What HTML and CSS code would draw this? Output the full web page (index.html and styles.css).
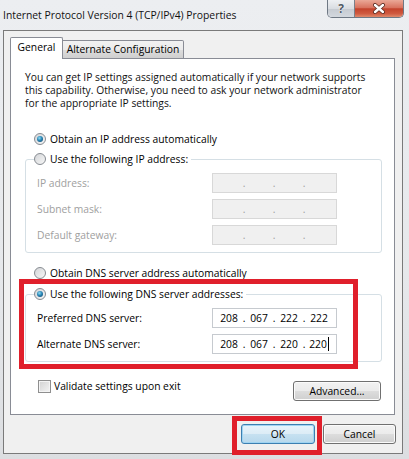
FILE: index.html
```html
<!DOCTYPE html>
<html>
<head>
<meta charset="utf-8">
<link rel="stylesheet" href="styles.css">
</head>
<body>
<div class="window">
  <div class="titlebar">
    <div class="title">Internet Protocol Version 4 (TCP/IPv4) Properties</div>
    <div class="caption-btns">
      <div class="cbtn help">?</div>
      <div class="cbtn close">
        <svg width="16" height="11" viewBox="0 0 16 11"><path d="M4 2 L12 9 M12 2 L4 9" stroke="#5a2a20" stroke-width="4" stroke-linecap="round"/><path d="M4 2 L12 9 M12 2 L4 9" stroke="#ffffff" stroke-width="2.4" stroke-linecap="round"/></svg>
      </div>
    </div>
  </div>
  <div class="client">
    <div class="tabs">
      <div class="tab active">General</div>
      <div class="tab">Alternate Configuration</div>
    </div>
    <div class="panel">
      <p class="intro">You can get IP settings assigned automatically if your network supports<br>this capability. Otherwise, you need to ask your network administrator<br>for the appropriate IP settings.</p>
      <div class="opt top1"><span class="radio checked"></span><span>Obtain an IP address automatically</span></div>
      <fieldset class="group g1">
        <legend class="opt"><span class="radio"></span><span>Use the following IP address:</span></legend>
        <div class="field disabled"><span class="flabel">IP address:</span><div class="ipbox"><span class="seg"></span><span class="dot">.</span><span class="seg"></span><span class="dot">.</span><span class="seg"></span><span class="dot">.</span><span class="seg"></span></div></div>
        <div class="field disabled"><span class="flabel">Subnet mask:</span><div class="ipbox"><span class="seg"></span><span class="dot">.</span><span class="seg"></span><span class="dot">.</span><span class="seg"></span><span class="dot">.</span><span class="seg"></span></div></div>
        <div class="field disabled"><span class="flabel">Default gateway:</span><div class="ipbox"><span class="seg"></span><span class="dot">.</span><span class="seg"></span><span class="dot">.</span><span class="seg"></span><span class="dot">.</span><span class="seg"></span></div></div>
      </fieldset>
      <div class="opt top3"><span class="radio"></span><span>Obtain DNS server address automatically</span></div>
      <fieldset class="group g2">
        <legend class="opt"><span class="radio checked"></span><span>Use the following DNS server addresses:</span></legend>
        <div class="field"><span class="flabel">Preferred DNS server:</span><div class="ipbox"><span class="seg">208</span><span class="dot">.</span><span class="seg">067</span><span class="dot">.</span><span class="seg">222</span><span class="dot">.</span><span class="seg">222</span></div></div>
        <div class="field"><span class="flabel">Alternate DNS server:</span><div class="ipbox"><span class="seg">208</span><span class="dot">.</span><span class="seg">067</span><span class="dot">.</span><span class="seg">220</span><span class="dot">.</span><span class="seg">220<span class="caret"></span></span></div></div>
      </fieldset>
      <div class="bottomrow">
        <span class="check"></span><span class="checklabel">Validate settings upon exit</span>
        <div class="btn advanced">Advanced...</div>
      </div>
    </div>
    <div class="actions">
      <div class="btn ok">OK</div>
      <div class="btn cancel">Cancel</div>
    </div>
  </div>
  <div class="mark mark-dns"></div>
  <div class="mark mark-ok"></div>
</div>
</body>
</html>
```

FILE: styles.css
```css
html, body {
  margin: 0;
  padding: 0;
  background: #e9ebee;
}
body {
  font-family: "Open Sans", "Noto Sans", sans-serif;
  font-size: 10.3px;
  color: #000;
}
.window {
  position: relative;
  width: 409px;
  height: 459px;
  overflow: hidden;
  background: linear-gradient(#eceef1, #e6e8eb 60%, #dcdee1);
}
.titlebar {
  height: 30px;
  display: flex;
  align-items: flex-start;
}
.title {
  padding-left: 3px;
  line-height: 31px;
  font-size: 10.35px;
  color: #111;
}
.caption-btns {
  margin-left: auto;
  margin-right: 5px;
  display: flex;
  height: 18px;
  border: 1px solid #6e7884;
  border-top: none;
  border-radius: 0 0 5px 5px;
  overflow: hidden;
  box-sizing: border-box;
}
.cbtn {
  height: 17px;
  display: flex;
  align-items: center;
  justify-content: center;
}
.help {
  width: 26px;
  border-right: 1px solid #7a808a;
  background: linear-gradient(#eef0f3, #d9dde2 50%, #c5cad1 51%, #d3d8de);
  color: #4f5864;
  font-weight: bold;
  font-size: 12px;
  text-shadow: 0 0 1px #fff, 0 0 1px #fff;
}
.close {
  width: 48px;
  background: linear-gradient(#eaa897, #d8735f 45%, #c3432c 52%, #cf5a40 80%, #e08a6c);
}
.client {
  margin-left: 3px;
  width: 400px;
  height: 424px;
  box-sizing: border-box;
  border: 1px solid #7a7a7a;
  background: #f0f0f0;
  padding: 6px 0 0 6px;
  display: flex;
  flex-direction: column;
}
.tabs {
  display: flex;
  align-items: flex-end;
  height: 22px;
  margin-bottom: -1px;
  position: relative;
  z-index: 1;
}
.tab {
  box-sizing: border-box;
  height: 19px;
  width: 121px;
  border: 1px solid #898c95;
  border-left: none;
  background: linear-gradient(#f2f2f2, #ebebeb 50%, #dddddd 51%, #cfcfcf);
  text-align: center;
  line-height: 17px;
  border-radius: 0 2px 0 0;
}
.tab.active {
  height: 22px;
  width: 53px;
  border-left: 1px solid #898c95;
  border-bottom: none;
  background: #fff;
  line-height: 19px;
  border-radius: 2px 2px 0 0;
}
.panel {
  width: 385px;
  height: 357px;
  box-sizing: border-box;
  border: 1px solid #898c95;
  background: #fff;
  padding: 0 12px 0 14px;
  display: flex;
  flex-direction: column;
}
.intro {
  margin: 12px 0 0;
  line-height: 13px;
  color: #111;
}
.opt {
  display: flex;
  align-items: center;
  height: 16px;
  gap: 4px;
}
.top1 {
  margin-top: 21px;
  padding-left: 9px;
}
.top3 {
  margin-top: 12px;
  padding-left: 9px;
}
.radio {
  width: 12px;
  height: 12px;
  box-sizing: border-box;
  border-radius: 50%;
  border: 1px solid #868b91;
  background: linear-gradient(135deg, #d4d6d9, #f6f6f6);
  display: flex;
  align-items: center;
  justify-content: center;
  flex: none;
}
.radio.checked::after {
  content: "";
  width: 6px;
  height: 6px;
  border-radius: 50%;
  background: radial-gradient(circle at 40% 35%, #8fdcf5 0, #2a86b5 45%, #0d3d63 100%);
}
.group {
  margin: 4px 0 0;
  border: 1px solid #d5dfe5;
  border-radius: 3px;
  padding: 6px 0 7px 11px;
  min-width: 0;
}
.group legend {
  padding: 0 3px 0 0;
  margin-left: -3px;
}
.g2 {
  margin-top: 5px;
}
.field {
  display: flex;
  align-items: center;
  height: 20px;
  margin-top: 6px;
}
.group legend + .field {
  margin-top: 0;
}
.flabel {
  width: 175px;
  flex: none;
}
.disabled .flabel {
  color: #a0a0a0;
}
.ipbox {
  width: 125px;
  height: 20px;
  box-sizing: border-box;
  border: 1px solid #c6cacf;
  background: #fff;
  display: flex;
  align-items: center;
  padding-left: 4px;
}
.disabled .ipbox {
  background: #f0f0f0;
  border-color: #d8d8d8;
  color: #a0a0a0;
}
.seg {
  width: 24px;
  text-align: center;
  display: flex;
  justify-content: center;
  align-items: center;
}
.dot {
  width: 6px;
  text-align: center;
}
.caret {
  display: inline-block;
  width: 1px;
  height: 14px;
  background: #000;
  margin-left: 1px;
}
.bottomrow {
  display: flex;
  align-items: flex-start;
  margin-top: 18px;
  padding-left: 13px;
}
.check {
  width: 13px;
  height: 13px;
  box-sizing: border-box;
  border: 1px solid #8f8f8f;
  background: linear-gradient(135deg, #d2d2d2, #f4f4f4);
  box-shadow: inset 0 0 0 1px #f4f4f4;
  flex: none;
}
.checklabel {
  margin-left: 3px;
  line-height: 13px;
}
.btn {
  box-sizing: border-box;
  height: 20px;
  border: 1px solid #707070;
  border-radius: 3px;
  background: linear-gradient(#f2f2f2, #ebebeb 50%, #dddddd 51%, #cfcfcf);
  box-shadow: inset 0 0 0 1px #fbfbfb;
  text-align: center;
  line-height: 18px;
}
.advanced {
  margin-left: auto;
  margin-right: 1px;
  margin-top: 1px;
  width: 88px;
}
.actions {
  display: flex;
  justify-content: flex-end;
  gap: 8px;
  margin-top: 9px;
  margin-right: 6px;
}
.ok {
  width: 74px;
  border-color: #3c7fb1;
  background: linear-gradient(#e8f4fb, #dcecf6 50%, #c6e1f1 51%, #b7d8ec);
  box-shadow: inset 0 0 0 1px #9fd4f2;
}
.cancel {
  width: 73px;
}
.mark {
  position: absolute;
  box-sizing: border-box;
  border: 5px solid #e01f2b;
}
.mark-dns {
  left: 19px;
  top: 279px;
  width: 339px;
  height: 90px;
}
.mark-ok {
  left: 232px;
  top: 416px;
  width: 90px;
  height: 39px;
}
```
